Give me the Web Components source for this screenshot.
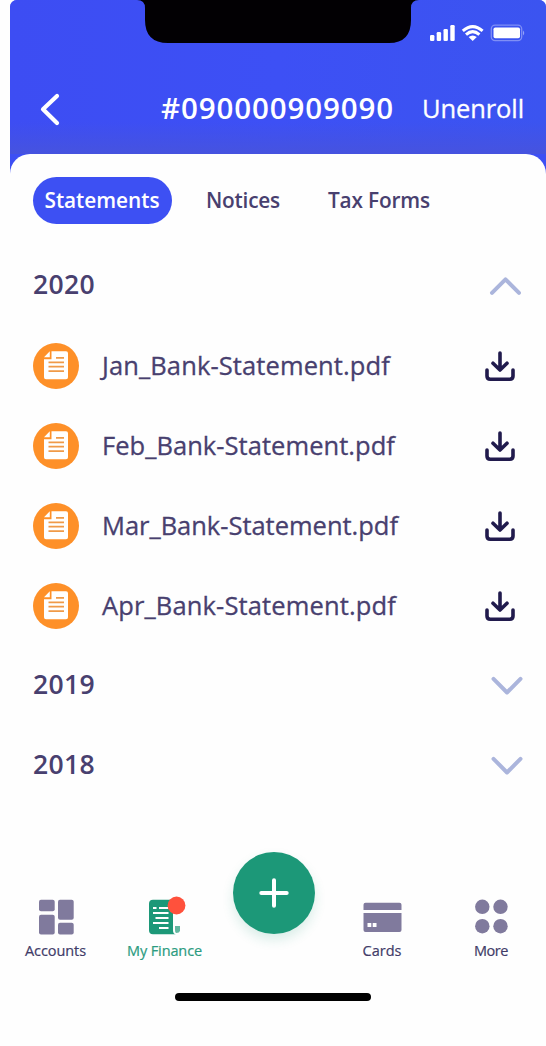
<!DOCTYPE html>
<html lang="en">
<head>
<meta charset="utf-8">
<title>Statements</title>
<style>
  body {
    margin: 0;
    background: #fefefe;
    font-family: "Open Sans", "Noto Sans", sans-serif;
    color: #48406f;
  }
</style>
</head>
<body>
<bank-screen>
  <status-bar slot="top"></status-bar>
  <title-bar slot="top">
    <fit-text slot="title" width="233">#090000909090</fit-text>
    <fit-text slot="action" width="102">Unenroll</fit-text>
  </title-bar>
  <tab-strip>
    <tab-item active><fit-text width="115">Statements</fit-text></tab-item>
    <tab-item style="margin-left:34px"><fit-text width="74">Notices</fit-text></tab-item>
    <tab-item style="margin-left:48px"><fit-text width="102">Tax Forms</fit-text></tab-item>
  </tab-strip>
  <year-group open>
    <fit-text slot="year" width="62">2020</fit-text>
    <file-row><fit-text width="288">Jan_Bank-Statement.pdf</fit-text></file-row>
    <file-row><fit-text width="293">Feb_Bank-Statement.pdf</fit-text></file-row>
    <file-row><fit-text width="296">Mar_Bank-Statement.pdf</fit-text></file-row>
    <file-row><fit-text width="294">Apr_Bank-Statement.pdf</fit-text></file-row>
  </year-group>
  <year-group><fit-text slot="year" width="62">2019</fit-text></year-group>
  <year-group><fit-text slot="year" width="62">2018</fit-text></year-group>
  <nav-bar slot="bottom">
    <nav-item icon="accounts"><fit-text width="61">Accounts</fit-text></nav-item>
    <nav-item icon="finance" active><fit-text width="75">My Finance</fit-text></nav-item>
    <add-button></add-button>
    <nav-item icon="cards"><fit-text width="39">Cards</fit-text></nav-item>
    <nav-item icon="more"><fit-text width="34">More</fit-text></nav-item>
  </nav-bar>
</bank-screen>

<script>
// Base class: every element only has to supply its template
class BaseElement extends HTMLElement {
  constructor() {
    super();
    this.attachShadow({mode: 'open'});
  }

  connectedCallback() {
    this.shadowRoot.innerHTML = this.template();
  }
}

class BankScreen extends BaseElement {
  template() {
    return `
      <style>
        :host { display: block; width: 546px; height: 1046px; box-sizing: border-box; padding-left: 10px; overflow: hidden; }
        .screen { height: 100%; display: flex; flex-direction: column; border-radius: 7px 7px 0 0; overflow: hidden;
          background: linear-gradient(#3d4ff4, #3d4ff4) top / 100% 180px no-repeat #fefefe; }
        .top { height: 154px; flex: none; background: linear-gradient(to bottom, transparent 122px, #4653df 154px),
          linear-gradient(to right, #3d4df3, #3d50f5 50%, #3b54f0); }
        .sheet { flex: 1; background: #fefefe; border-radius: 20px 20px 0 0; padding: 23px 23px 0; }
        .bottom { height: 200px; flex: none; }
      </style>
      <div class="screen">
        <div class="top"><slot name="top"></slot></div>
        <div class="sheet"><slot></slot></div>
        <div class="bottom"><slot name="bottom"></slot></div>
      </div>`;
  }
}

class StatusBar extends BaseElement {
  template() {
    return `
      <style>
        :host { display: block; height: 64px; }
        svg { display: block; }
      </style>
      <svg width="536" height="64" viewBox="10 0 536 64">
        <path d="M137 0 Q145 0 145 8 V20 Q145 43 168 43 H389 Q411 43 411 20 V8 Q411 0 419 0Z" fill="#020003"/>
        <g fill="#fff">
          <rect x="430" y="35" width="4.4" height="6" rx="1.3"/>
          <rect x="436.7" y="32" width="4.4" height="9" rx="1.3"/>
          <rect x="443.5" y="29" width="4.4" height="12" rx="1.3"/>
          <rect x="450.3" y="25" width="4.4" height="16" rx="1.3"/>
          <path d="M472.7 41 L468.6 37 Q472.7 33.8 476.8 37Z"/>
          <rect x="493.5" y="27.5" width="26.5" height="10.8" rx="1.8"/>
        </g>
        <path d="M462.8 30.9 Q472.7 22.3 482.6 30.9 M466 34.6 Q472.7 28.6 479.4 34.6" fill="none" stroke="#fff" stroke-width="3"/>
        <rect x="491.3" y="25.2" width="30.4" height="15.4" rx="3.8" fill="none" stroke="#fff" stroke-opacity=".35" stroke-width="1.3"/>
        <path d="M523 30.5 Q525.5 33 523 35.5Z" fill="#fff" fill-opacity=".45"/>
      </svg>`;
  }
}

class TitleBar extends BaseElement {
  template() {
    return `
      <style>
        :host { display: flex; align-items: center; height: 90px; color: #fff; padding: 0 22px 0 30px; }
        svg { flex: none; margin-right: 99px; }
        ::slotted([slot=title]) { font-size: 29.5px; font-weight: 600; margin-top: -4px; }
        ::slotted([slot=action]) { font-size: 25.5px; font-weight: 400; margin-left: 28px; margin-top: -2px; -webkit-text-stroke: .3px; }
      </style>
      <svg width="22" height="34" viewBox="0 0 22 34"><path d="M17 4 L3 17.2 L17 31" fill="none" stroke="#fff" stroke-width="4.2" stroke-linecap="round" stroke-linejoin="round"/></svg>
      <slot name="title"></slot><slot name="action"></slot>`;
  }
}

class TabStrip extends BaseElement {
  template() {
    return `
      <style>
        :host { display: flex; height: 47px; margin-bottom: 22px; }
      </style>
      <slot></slot>`;
  }
}

class TabItem extends BaseElement {
  template() {
    return `
      <style>
        :host { display: flex; align-items: center; font-size: 20.8px; font-weight: 600; }
        :host([active]) { background: #3d50f3; color: #fff; border-radius: 24px; padding: 0 12.5px 0 11.5px; }
        ::slotted(*) { margin-top: -2px; }
      </style>
      <slot></slot>`;
  }
}

class YearGroup extends BaseElement {
  template() {
    // open groups show an upward arrow
    var arrow = this.hasAttribute('open')
      ? '<path d="M3 17.8 L16.5 4.3 L30 17.8"/>'
      : '<path d="M4.5 3.8 L18 17.5 L31.5 3.8"/>';
    return `
      <style>
        :host { display: block; font-size: 26.5px; font-weight: 600; }
        header { display: flex; align-items: center; justify-content: space-between; height: 80px; }
        svg { margin-right: -2px; }
        ::slotted([slot=year]) { margin-top: -4px; }
      </style>
      <header>
        <slot name="year"></slot>
        <svg width="36" height="22" viewBox="0 0 36 22" fill="none" stroke="#abb5dc" stroke-width="4" stroke-linecap="round" stroke-linejoin="round">${arrow}</svg>
      </header>
      <slot></slot>`;
  }
}

class FileRow extends BaseElement {
  template() {
    return `
      <style>
        :host { display: flex; align-items: center; height: 80px; font-size: 25.5px; font-weight: 500; -webkit-text-stroke: .3px; }
        svg { flex: none; }
        .doc { margin-right: 23px; }
        .download { margin: 0 8px 0 auto; }
        ::slotted(*) { margin-top: -3px; }
      </style>
      <svg class="doc" width="46" height="46" viewBox="0 0 46 46">
        <circle cx="23" cy="23" r="23" fill="#fe9028"/>
        <path d="M18.5 8.3 H33 Q35 8.3 35 10.3 V34.3 Q35 36.3 33 36.3 H13 Q11 36.3 11 34.3 V16.2 H18.5Z M16.8 8.3 V14.3 H11Z" fill="#fff"/>
        <path d="M23 14.8 H31 M15.5 19.3 H31 M15.5 23.7 H31 M15.5 28.2 H31" stroke="#f09a48" stroke-width="1.7"/>
      </svg>
      <slot></slot>
      <svg class="download" width="30" height="32" viewBox="0 0 30 32" fill="none" stroke="#211b4d" stroke-width="3.6" stroke-linecap="round" stroke-linejoin="round">
        <path d="M15 3 V19.5 M8 13.2 L15 20 L22 13.2 M2 20 V26 Q2 29.2 5.2 29.2 H24.8 Q28 29.2 28 26 V20"/>
      </svg>`;
  }
}

class NavBar extends BaseElement {
  template() {
    return `
      <style>
        :host { display: block; height: 200px; }
        .items { display: grid; grid-template-columns: 91px 127px 92px 124px 94px; height: 120px; }
        .home { width: 196px; height: 7.5px; border-radius: 4px; background: #000; margin: 27.3px 0 0 165px; }
      </style>
      <div class="items"><slot></slot></div>
      <div class="home"></div>`;
  }
}

class NavItem extends BaseElement {
  icons() {
    return {
      accounts: `<g fill="#807a9d"><rect x="4" y="3.7" width="15.7" height="11.5" rx="2"/><rect x="23" y="3.7" width="15.7" height="20" rx="2"/>
        <rect x="4" y="18.7" width="15.7" height="19.7" rx="2"/><rect x="23" y="26.7" width="15.7" height="11.7" rx="2"/></g>`,
      finance: `<path d="M9 3.7 H29 V34 Q29 38.3 32 38.3 H9 Q5 38.3 5 34.3 V7.7 Q5 3.7 9 3.7Z" fill="#1c9878"/>
        <path d="M31 30 H36 V34.5 Q35.5 37 32 37 Q31 36.5 31 34Z" fill="#63b7a0"/>
        <path d="M9 12 H12.5 M15 12 H24.5 M9 17 H24.5 M11.5 22 H24.5 M9 27 H24.5 M15 32 H24.5" stroke="#fff" stroke-width="2"/>
        <circle cx="32.5" cy="9.5" r="8.9" fill="#ff513c"/>`,
      cards: `<path d="M4.5 6.7 H38.5 Q40.5 6.7 40.5 8.7 V14 H2.5 V8.7 Q2.5 6.7 4.5 6.7Z M2.5 17 H40.5 V34 Q40.5 36 38.5 36 H4.5 Q2.5 36 2.5 34Z" fill="#807a9d"/>
        <path d="M6.5 27 H10.3 V31 H6.5Z M11.7 27 H15.5 V31 H11.7Z" fill="#fff"/>`,
      more: `<g fill="#807a9d"><circle cx="12.3" cy="10.8" r="7.2"/><circle cx="30.5" cy="10.8" r="7.2"/><circle cx="12.3" cy="30.2" r="7.2"/><circle cx="30.5" cy="30.2" r="7.2"/></g>`
    };
  }

  template() {
    return `
      <style>
        :host { display: flex; flex-direction: column; align-items: center; padding-top: 50px; font-size: 14.5px; font-weight: 500; line-height: 20px; color: #413b68; -webkit-text-stroke: .2px; }
        :host([active]) { color: #2b9b80; }
        ::slotted(*) { margin-top: 3px; }
      </style>
      <svg width="42" height="42" viewBox="0 0 42 42">${this.icons()[this.getAttribute('icon')]}</svg>
      <slot></slot>`;
  }
}

class AddButton extends BaseElement {
  template() {
    return `
      <style>
        :host { display: block; width: 82px; height: 82px; border-radius: 50%; background: #1c9878; margin: 5.5px 0 0 5px; box-shadow: 0 6px 12px rgba(28, 152, 120, .16); }
        svg { display: block; }
      </style>
      <svg width="82" height="82" viewBox="0 0 82 82"><path d="M41 28.3 V53.7 M28.3 41 H53.7" stroke="#fff" stroke-width="4" stroke-linecap="round"/></svg>`;
  }
}

/**
 * A single line label that is tracked out (or in) to its width attribute.
 */
class FitText extends BaseElement {
  template() {
    return `
      <style>
        :host { display: block; flex: none; white-space: nowrap; }
        span { display: inline-block; }
      </style>
      <span><slot></slot></span>`;
  }

  connectedCallback() {
    super.connectedCallback();
    var span = this.shadowRoot.querySelector('span');
    var width = parseFloat(this.getAttribute('width'));
    var spacing = (width - span.getBoundingClientRect().width) / this.textContent.length;
    span.style.letterSpacing = spacing + 'px';
    this.style.width = width + 'px';
  }
}

customElements.define('bank-screen', BankScreen);
customElements.define('status-bar', StatusBar);
customElements.define('title-bar', TitleBar);
customElements.define('tab-strip', TabStrip);
customElements.define('tab-item', TabItem);
customElements.define('year-group', YearGroup);
customElements.define('file-row', FileRow);
customElements.define('nav-bar', NavBar);
customElements.define('nav-item', NavItem);
customElements.define('add-button', AddButton);
// last, because it measures with the fonts of its parents
customElements.define('fit-text', FitText);
</script>
</body>
</html>
